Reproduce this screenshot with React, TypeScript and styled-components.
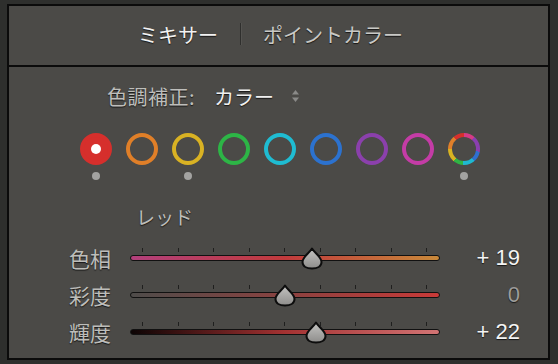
import styled, { createGlobalStyle } from 'styled-components';

const GlobalStyle = createGlobalStyle`
  html, body {
    margin: 0;
    padding: 0;
    background: #2e2f2d;
  }
  body {
    padding: 4px 8px 4px 7px;
    font-family: "Noto Sans CJK JP", "Noto Sans", sans-serif;
  }
`;

const Frame = styled.div`
  width: 539px;
  height: 352px;
  border: 2px solid #0b0b0b;
  background: #4b4a47;
  display: flex;
  flex-direction: column;
`;

const Header = styled.div`
  height: 61px;
  flex-shrink: 0;
  display: flex;
  align-items: center;
  justify-content: center;
  border-bottom: 2px solid #0b0b0b;
  padding-right: 16px;
  padding-bottom: 3px;
  box-sizing: border-box;
  font-size: 20px;
  text-shadow: 0 1px 1px rgba(0, 0, 0, 0.7);
`;

const Tab = styled.span<{ $active?: boolean }>`
  color: ${(p) => (p.$active ? '#f2f2f2' : '#c9c9c6')};
`;

const Separator = styled.span`
  width: 1px;
  height: 22px;
  background: #2f2f2d;
  margin: 0 22px;
  box-shadow: 1px 0 0 rgba(255, 255, 255, 0.06);
`;

const Body = styled.div`
  flex: 1;
  display: flex;
  flex-direction: column;
`;

const ToneRow = styled.div`
  display: flex;
  align-items: center;
  height: 28px;
  margin-top: 15px;
  padding-left: 98px;
  font-size: 20px;
  text-shadow: 0 1px 1px rgba(0, 0, 0, 0.7);
`;

const ToneLabel = styled.span`
  color: #bebebb;
  letter-spacing: 0.5px;
`;

const ToneValue = styled.span`
  color: #f0f0f0;
  margin-left: 19px;
`;

const Stepper = styled.svg`
  margin-left: 17px;
`;

const Swatches = styled.div`
  display: flex;
  gap: 14px;
  margin-top: 23px;
  padding-left: 71px;
`;

const SwatchCol = styled.div`
  display: flex;
  flex-direction: column;
  align-items: center;
  gap: 7px;
`;

const Ring = styled.div<{ $color: string; $selected?: boolean }>`
  width: 32px;
  height: 32px;
  border-radius: 50%;
  box-sizing: border-box;
  border: 4px solid ${(p) => p.$color};
  background: ${(p) => (p.$selected ? p.$color : 'transparent')};
  display: flex;
  align-items: center;
  justify-content: center;
`;

const MultiRing = styled.div`
  width: 32px;
  height: 32px;
  border-radius: 50%;
  background: conic-gradient(
    #d63a86 0deg 40deg,
    #8a3fb0 40deg 100deg,
    #2f6fd0 100deg 140deg,
    #1fb8d0 140deg 185deg,
    #2fb544 185deg 220deg,
    #d8b321 220deg 270deg,
    #e0802a 270deg 320deg,
    #d6302c 320deg 360deg
  );
  display: flex;
  align-items: center;
  justify-content: center;

  &::after {
    content: '';
    width: 24px;
    height: 24px;
    border-radius: 50%;
    background: #4b4a47;
  }
`;

const Pip = styled.div`
  width: 8px;
  height: 8px;
  border-radius: 50%;
  background: #a3a3a1;
`;

const PipSpace = styled.div`
  width: 8px;
  height: 8px;
`;

const Dot = styled.div`
  width: 10px;
  height: 10px;
  border-radius: 50%;
  background: #fff;
`;

const SectionTitle = styled.div`
  color: #bdbdba;
  font-size: 19px;
  padding-left: 127px;
  margin-top: 24px;
  height: 26px;
  line-height: 26px;
  text-shadow: 0 1px 1px rgba(0, 0, 0, 0.7);
`;

const Sliders = styled.div`
  display: flex;
  flex-direction: column;
  margin-top: 9px;
`;

const SliderRow = styled.div`
  display: grid;
  grid-template-columns: 102px 310px 61px;
  column-gap: 19px;
  align-items: center;
  height: 37px;
`;

const RowLabel = styled.span`
  color: #bdbdba;
  font-size: 21px;
  justify-self: end;
  text-shadow: 0 1px 1px rgba(0, 0, 0, 0.7);
`;

const TrackArea = styled.div`
  position: relative;
  height: 24px;
`;

const Ticks = styled.div`
  position: absolute;
  left: 12px;
  right: 13px;
  top: 2px;
  display: flex;
  justify-content: space-between;
`;

const Tick = styled.span`
  width: 1px;
  height: 4px;
  background: #1f1f1e;
`;

const Track = styled.div<{ $gradient: string }>`
  position: absolute;
  left: 0;
  right: 0;
  top: 9px;
  height: 6px;
  box-sizing: border-box;
  border: 1.5px solid #111;
  border-radius: 4px;
  background: ${(p) => p.$gradient};
`;

const Thumb = styled.svg`
  position: absolute;
  top: 1px;
  margin-left: -11px;
`;

const Value = styled.span<{ $dim?: boolean }>`
  font-family: "Liberation Sans", Arial, sans-serif;
  font-size: 22px;
  color: ${(p) => (p.$dim ? '#9d9d9b' : '#f4f4f4')};
  justify-self: end;
  text-shadow: 0 1px 1px rgba(0, 0, 0, 0.7);
`;

const swatches = [
  { color: '#d62f2c', selected: true, pip: true },
  { color: '#e07f28', pip: false },
  { color: '#d9b223', pip: true },
  { color: '#2db546', pip: false },
  { color: '#1fbcd2', pip: false },
  { color: '#2c72cf', pip: false },
  { color: '#8b40ac', pip: false },
  { color: '#c43ca6', pip: false },
];

const sliders = [
  {
    label: '色相',
    value: 19,
    gradient: 'linear-gradient(90deg, #b2407c 0%, #c13a3c 50%, #c8893a 100%)',
  },
  {
    label: '彩度',
    value: 0,
    gradient: 'linear-gradient(90deg, #4e4c4a 0%, #8a4240 50%, #c83a38 100%)',
  },
  {
    label: '輝度',
    value: 22,
    gradient: 'linear-gradient(90deg, #0c0404 0%, #a43232 50%, #d27474 100%)',
  },
];

const formatValue = (v: number) => (v > 0 ? `+ ${v}` : v < 0 ? `- ${-v}` : '0');

const ThumbIcon = ({ left }: { left: number }) => (
  <Thumb width="22" height="23" viewBox="0 0 22 23" style={{ left: `${left}%` }}>
    <defs>
      <linearGradient id="thumbFill" x1="0" y1="0" x2="0" y2="1">
        <stop offset="0" stopColor="#c4c4c2" />
        <stop offset="1" stopColor="#8e8d8b" />
      </linearGradient>
    </defs>
    <path
      d="M11 1.5 C13.5 6 20.5 10 20.5 15 C20.5 19.5 16 21.5 11 21.5 C6 21.5 1.5 19.5 1.5 15 C1.5 10 8.5 6 11 1.5 Z"
      fill="url(#thumbFill)"
      stroke="#0d0d0d"
      strokeWidth="2"
      strokeLinejoin="round"
    />
  </Thumb>
);

const App = () => {
  return (
    <>
      <GlobalStyle />
      <Frame>
        <Header>
          <Tab $active>ミキサー</Tab>
          <Separator />
          <Tab>ポイントカラー</Tab>
        </Header>
        <Body>
          <ToneRow>
            <ToneLabel>色調補正:</ToneLabel>
            <ToneValue>カラー</ToneValue>
            <Stepper width="9" height="14" viewBox="0 0 9 14">
              <path d="M4.5 1 L8 5.5 H1 Z" fill="#8a8a88" />
              <path d="M4.5 13 L8 8.5 H1 Z" fill="#8a8a88" />
            </Stepper>
          </ToneRow>
          <Swatches>
            {swatches.map((s) => (
              <SwatchCol key={s.color}>
                <Ring $color={s.color} $selected={s.selected}>
                  {s.selected && <Dot />}
                </Ring>
                {s.pip ? <Pip /> : <PipSpace />}
              </SwatchCol>
            ))}
            <SwatchCol>
              <MultiRing />
              <Pip />
            </SwatchCol>
          </Swatches>
          <SectionTitle>レッド</SectionTitle>
          <Sliders>
            {sliders.map((s) => (
              <SliderRow key={s.label}>
                <RowLabel>{s.label}</RowLabel>
                <TrackArea>
                  <Ticks>
                    {Array.from({ length: 9 }).map((_, i) => (
                      <Tick key={i} />
                    ))}
                  </Ticks>
                  <Track $gradient={s.gradient} />
                  <ThumbIcon left={50 + s.value * 0.45} />
                </TrackArea>
                <Value $dim={s.value === 0}>{formatValue(s.value)}</Value>
              </SliderRow>
            ))}
          </Sliders>
        </Body>
      </Frame>
    </>
  );
};

export default App;
